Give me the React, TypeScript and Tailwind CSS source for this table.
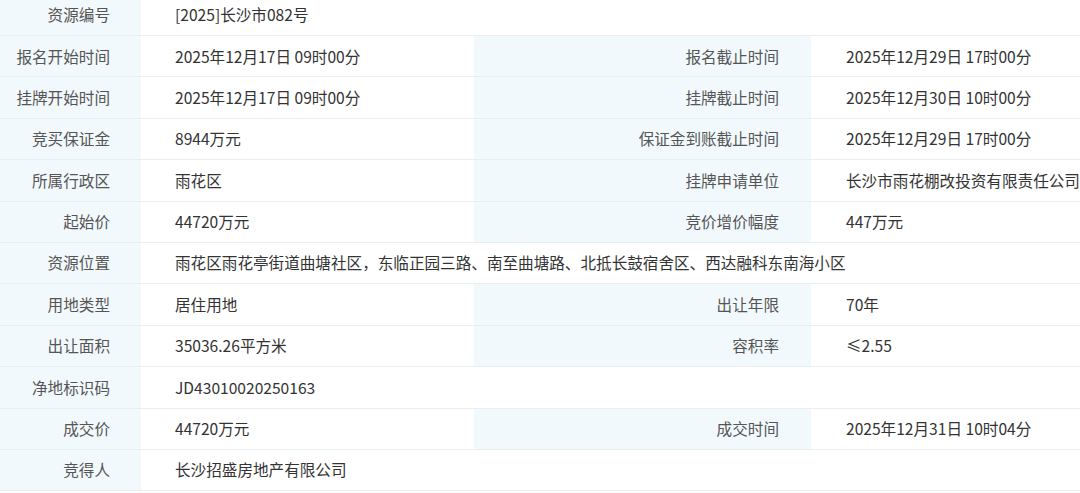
const rows: [string, string, string?, string?][] = [
  ["资源编号", "[2025]长沙市082号"],
  ["报名开始时间", "2025年12月17日 09时00分", "报名截止时间", "2025年12月29日 17时00分"],
  ["挂牌开始时间", "2025年12月17日 09时00分", "挂牌截止时间", "2025年12月30日 10时00分"],
  ["竞买保证金", "8944万元", "保证金到账截止时间", "2025年12月29日 17时00分"],
  ["所属行政区", "雨花区", "挂牌申请单位", "长沙市雨花棚改投资有限责任公司"],
  ["起始价", "44720万元", "竞价增价幅度", "447万元"],
  ["资源位置", "雨花区雨花亭街道曲塘社区，东临正园三路、南至曲塘路、北抵长鼓宿舍区、西达融科东南海小区"],
  ["用地类型", "居住用地", "出让年限", "70年"],
  ["出让面积", "35036.26平方米", "容积率", "≤2.55"],
  ["净地标识码", "JD43010020250163"],
  ["成交价", "44720万元", "成交时间", "2025年12月31日 10时04分"],
  ["竞得人", "长沙招盛房地产有限公司"],
];

export default function App() {
  return (
    <div className="w-[1080px] h-[493px] overflow-hidden bg-white text-[15.6px] font-['Segoe_UI','Noto_Sans_CJK_SC',sans-serif]">
      <div className="mt-[-5.4px]">
        {rows.map(([l1, v1, l2, v2], i) => (
          <div
            key={i}
            className="grid grid-cols-[141px_333px_337px_1fr] h-[41.4px] border-b border-[#e9eef0]"
          >
            <div className="bg-[#f2f9fc] flex items-center justify-end pr-[31px] text-[#555]">{l1}</div>
            {l2 === undefined ? (
              <div className="col-span-3 flex items-center pl-[34px] text-[#333] whitespace-nowrap">{v1}</div>
            ) : (
              <>
                <div className="flex items-center pl-[34px] text-[#333]">{v1}</div>
                <div className="bg-[#f2f9fc] flex items-center justify-end pr-[32px] text-[#555]">{l2}</div>
                <div className="flex items-center pl-[35px] text-[#333] whitespace-nowrap overflow-hidden">{v2}</div>
              </>
            )}
          </div>
        ))}
      </div>
    </div>
  );
}
